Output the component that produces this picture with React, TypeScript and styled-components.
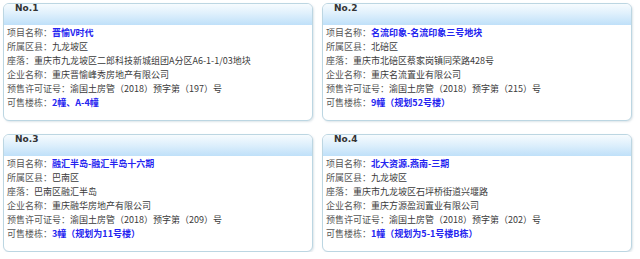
import React from "react";
import styled, { createGlobalStyle } from "styled-components";

const Global = createGlobalStyle`
  html, body { margin: 0; padding: 0; background: #ffffff; }
  body { font-family: "Noto Sans CJK SC", "DejaVu Sans", sans-serif; }
`;

const Grid = styled.div`
  display: grid;
  grid-template-columns: 310px 310px;
  column-gap: 9px;
  row-gap: 13px;
  padding: 3px 0 0 3px;
`;

const Card = styled.div`
  height: 118px;
  box-sizing: border-box;
  border: 1px solid #bcd6e2;
  border-radius: 6px;
  background: #ffffff;
  box-shadow: 1px 1px 2px rgba(120, 150, 170, 0.25);
  overflow: hidden;
`;

const Header = styled.div`
  height: 21px;
  background: linear-gradient(to bottom, #f6fbfe 0%, #dff0fc 45%, #bfe0f9 100%);
  padding-left: 11px;
  font-family: "DejaVu Sans", Verdana, sans-serif;
  font-weight: bold;
  font-size: 9px;
  line-height: 9px;
  color: #333333;
`;

const Body = styled.div`
  padding: 1px 0 0 3px;
`;

const Row = styled.div`
  font-size: 9px;
  line-height: 14px;
  height: 14px;
  color: #3a3a3a;
  white-space: nowrap;
`;

const Label = styled.span`
  color: #555555;
`;

const Value = styled.span<{ $link?: boolean }>`
  color: ${(p) => (p.$link ? "#2424f0" : "#3a3a3a")};
  font-weight: ${(p) => (p.$link ? "bold" : "normal")};
`;

type Item = {
  no: string;
  name: string;
  district: string;
  addr: string;
  company: string;
  permit: string;
  buildings: string;
};

const items: Item[] = [
  {
    no: "No.1",
    name: "晋愉V时代",
    district: "九龙坡区",
    addr: "重庆市九龙坡区二郎科技新城组团A分区A6-1-1/03地块",
    company: "重庆晋愉峰秀房地产有限公司",
    permit: "渝国土房管（2018）预字第（197）号",
    buildings: "2幢、A-4幢",
  },
  {
    no: "No.2",
    name: "名流印象-名流印象三号地块",
    district: "北碚区",
    addr: "重庆市北碚区蔡家岗镇同荣路428号",
    company: "重庆名流置业有限公司",
    permit: "渝国土房管（2018）预字第（215）号",
    buildings: "9幢（规划52号楼）",
  },
  {
    no: "No.3",
    name: "融汇半岛-融汇半岛十六期",
    district: "巴南区",
    addr: "巴南区融汇半岛",
    company: "重庆融华房地产有限公司",
    permit: "渝国土房管（2018）预字第（209）号",
    buildings: "3幢（规划为11号楼）",
  },
  {
    no: "No.4",
    name: "北大资源.燕南-三期",
    district: "九龙坡区",
    addr: "重庆市九龙坡区石坪桥街道兴堰路",
    company: "重庆方源盈润置业有限公司",
    permit: "渝国土房管（2018）预字第（202）号",
    buildings: "1幢（规划为5-1号楼B栋）",
  },
];

export default function App() {
  return (
    <>
      <Global />
      <Grid>
        {items.map((it) => (
          <Card key={it.no}>
            <Header>{it.no}</Header>
            <Body>
              <Row>
                <Label>项目名称：</Label>
                <Value $link>{it.name}</Value>
              </Row>
              <Row>
                <Label>所属区县：</Label>
                <Value>{it.district}</Value>
              </Row>
              <Row>
                <Label>座落：</Label>
                <Value>{it.addr}</Value>
              </Row>
              <Row>
                <Label>企业名称：</Label>
                <Value>{it.company}</Value>
              </Row>
              <Row>
                <Label>预售许可证号：</Label>
                <Value>{it.permit}</Value>
              </Row>
              <Row>
                <Label>可售楼栋：</Label>
                <Value $link>{it.buildings}</Value>
              </Row>
            </Body>
          </Card>
        ))}
      </Grid>
    </>
  );
}
